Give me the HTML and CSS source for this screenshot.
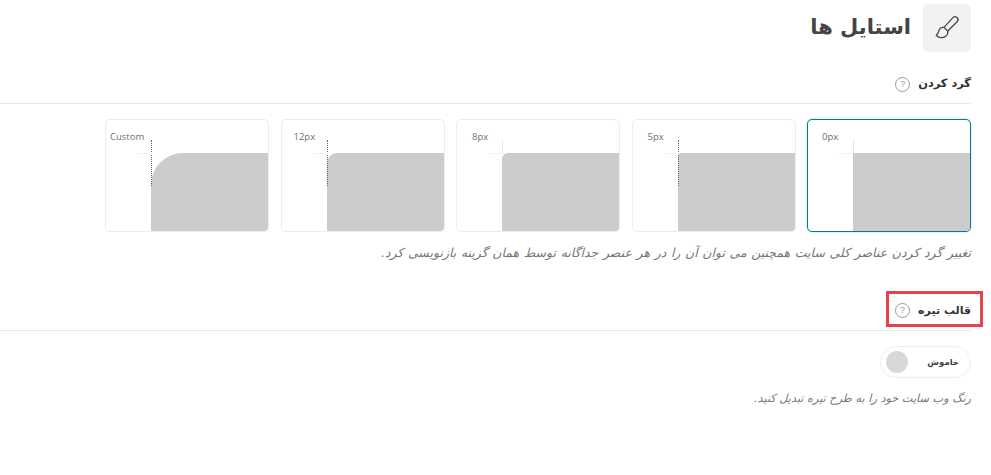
FILE: index.html
```html
<!DOCTYPE html>
<html lang="fa" dir="rtl">
<head>
<meta charset="utf-8">
<title>استایل ها</title>
<link rel="stylesheet" href="styles.css">
</head>
<body>
<main class="page">
  <header class="page-head">
    <span class="head-icon">
      <svg viewBox="0 0 24 24" width="30" height="30" fill="none" stroke="#4a4a4a" stroke-width="1.050" stroke-linecap="round" stroke-linejoin="round"><path d="M20 3.600c-1-.9-2.400-.8-3.300.1L9.600 11.500l3 2.900 7.500-7.400c.9-1 .9-2.500-.1-3.400z"/><path d="M9.600 11.500c-2-.2-3.700 1-4.200 2.900-.4 1.500-.6 2.500-2 3.400 1.700 2.200 5.300 2.600 7.500.8 1.600-1.300 2.100-2.800 1.700-4.200"/></svg>
    </span>
    <h1 class="page-title">استایل ها</h1>
  </header>

  <section class="section section-radius">
    <div class="section-head">
      <h2 class="section-title">گرد کردن</h2>
      <span class="help">?</span>
    </div>
    <div class="cards">
      <div class="card card-active"><span class="card-label label-0">0px</span><span class="guide"></span><span class="shape"></span></div>
      <div class="card"><span class="card-label">5px</span><span class="guide guide-dotted"></span><span class="shape" style="border-top-left-radius:3px"></span></div>
      <div class="card"><span class="card-label">8px</span><span class="guide"></span><span class="shape" style="border-top-left-radius:6px"></span></div>
      <div class="card"><span class="card-label label-12">12px</span><span class="guide guide-dotted"></span><span class="shape" style="border-top-left-radius:10px"></span></div>
      <div class="card"><span class="card-label label-custom">Custom</span><span class="guide guide-dotted"></span><span class="shape" style="border-top-left-radius:32px"></span></div>
    </div>
    <p class="hint hint-radius">تغییر گرد کردن عناصر کلی سایت همچنین می توان آن را در هر عنصر جداگانه توسط همان گزینه بازنویسی کرد.</p>
  </section>

  <section class="section section-dark">
    <div class="section-head section-head-dark">
      <h2 class="section-title title-dark">قالب تیره</h2>
      <span class="help">?</span>
      <span class="highlight"></span>
    </div>
    <div class="toggle">
      <span class="toggle-label">خاموش</span>
      <span class="toggle-knob"></span>
    </div>
    <p class="hint hint-dark">رنگ وب سایت خود را به طرح تیره تبدیل کنید.</p>
  </section>
</main>
</body>
</html>
```
FILE: styles.css
```css
* { box-sizing: border-box; }
html, body { margin: 0; background: #fff; }
body {
  font-family: "DejaVu Sans", sans-serif;
  color: #3a3a3a;
  overflow: hidden;
}
.page { height: 475px; padding: 4px 20px 0 0; }
.page-head { display: flex; align-items: center; gap: 12px; height: 48px; }
.head-icon {
  width: 48px; height: 48px; border-radius: 5px; background: #f2f2f2;
  display: flex; align-items: center; justify-content: center;
}
.page-title { margin: 0 0 2px; font-size: 21px; font-weight: 700; color: #444; line-height: 1; }
.section-radius { margin-top: 19px; }
.section-head {
  position: relative; display: flex; align-items: center; gap: 8px;
  height: 33px; padding-bottom: 6px; border-bottom: 1px solid #e8e8e8;
}
.section-title { margin: 0; font-size: 11.400px; font-weight: 700; color: #333; line-height: 1; }
.title-dark { font-size: 11px; }
.help {
  width: 15px; height: 15px; border: 1px solid #9a9a9a; border-radius: 50%;
  font-size: 9px; line-height: 13px; text-align: center; color: #9a9a9a;
  font-family: "Liberation Sans", sans-serif;
}
.cards { display: flex; gap: 11.500px; margin-top: 15px; width: 866px; }
.card {
  position: relative; flex: 0 0 164px; height: 113px;
  border: 1px solid #ececec; border-radius: 5px; background: #fff; overflow: hidden;
}
.card-active { border-color: #19708a; box-shadow: 0 0 2px #7fdcf5; overflow: visible; }
.card-active .shape { border-bottom-right-radius: 4px; }
.card-label {
  position: absolute; left: 15px; top: 11px; direction: ltr;
  font-family: "Open Sans", sans-serif; font-size: 9.500px; line-height: 12px; color: #707070;
}
.label-0 { left: 14px; }
.label-12 { left: 12px; }
.label-custom { left: 4px; }
.shape {
  position: absolute; left: 45px; right: 0; top: 33px; bottom: 0; background: #ccc;
}
.guide {
  position: absolute; left: 45px; top: 20px; height: 13px; width: 0;
  border-left: 1px solid #e4e4e4;
}
.guide::after {
  content: ""; position: absolute; left: -15px; top: 13px; width: 15px; height: 1px; background: #f3f3f3;
}
.guide-dotted { height: 46px; border-left: 1px dotted #666; z-index: 1; }
.hint {
  margin: 0; font-style: italic; color: #777; line-height: 13px;
}
.hint-radius { margin-top: 14px; font-size: 12.500px; word-spacing: 0.650px; }
.section-dark { margin-top: 37px; }
.section-head-dark { height: 35px; }
.highlight {
  position: absolute; right: -12px; top: -5px; width: 97px; height: 36px;
  border: 3px solid #e8424a;
}
.toggle {
  display: flex; align-items: center; justify-content: space-between;
  width: 91px; height: 32px; margin-top: 15px; padding: 0 11px 0 5px;
  border: 1px solid #eee; border-radius: 16px;
}
.toggle-label { font-size: 8.500px; font-weight: 700; color: #444; }
.toggle-knob { width: 22px; height: 22px; border-radius: 50%; background: #d8d8d8; }
.hint-dark { margin-top: 14px; font-size: 11.300px; }
```
